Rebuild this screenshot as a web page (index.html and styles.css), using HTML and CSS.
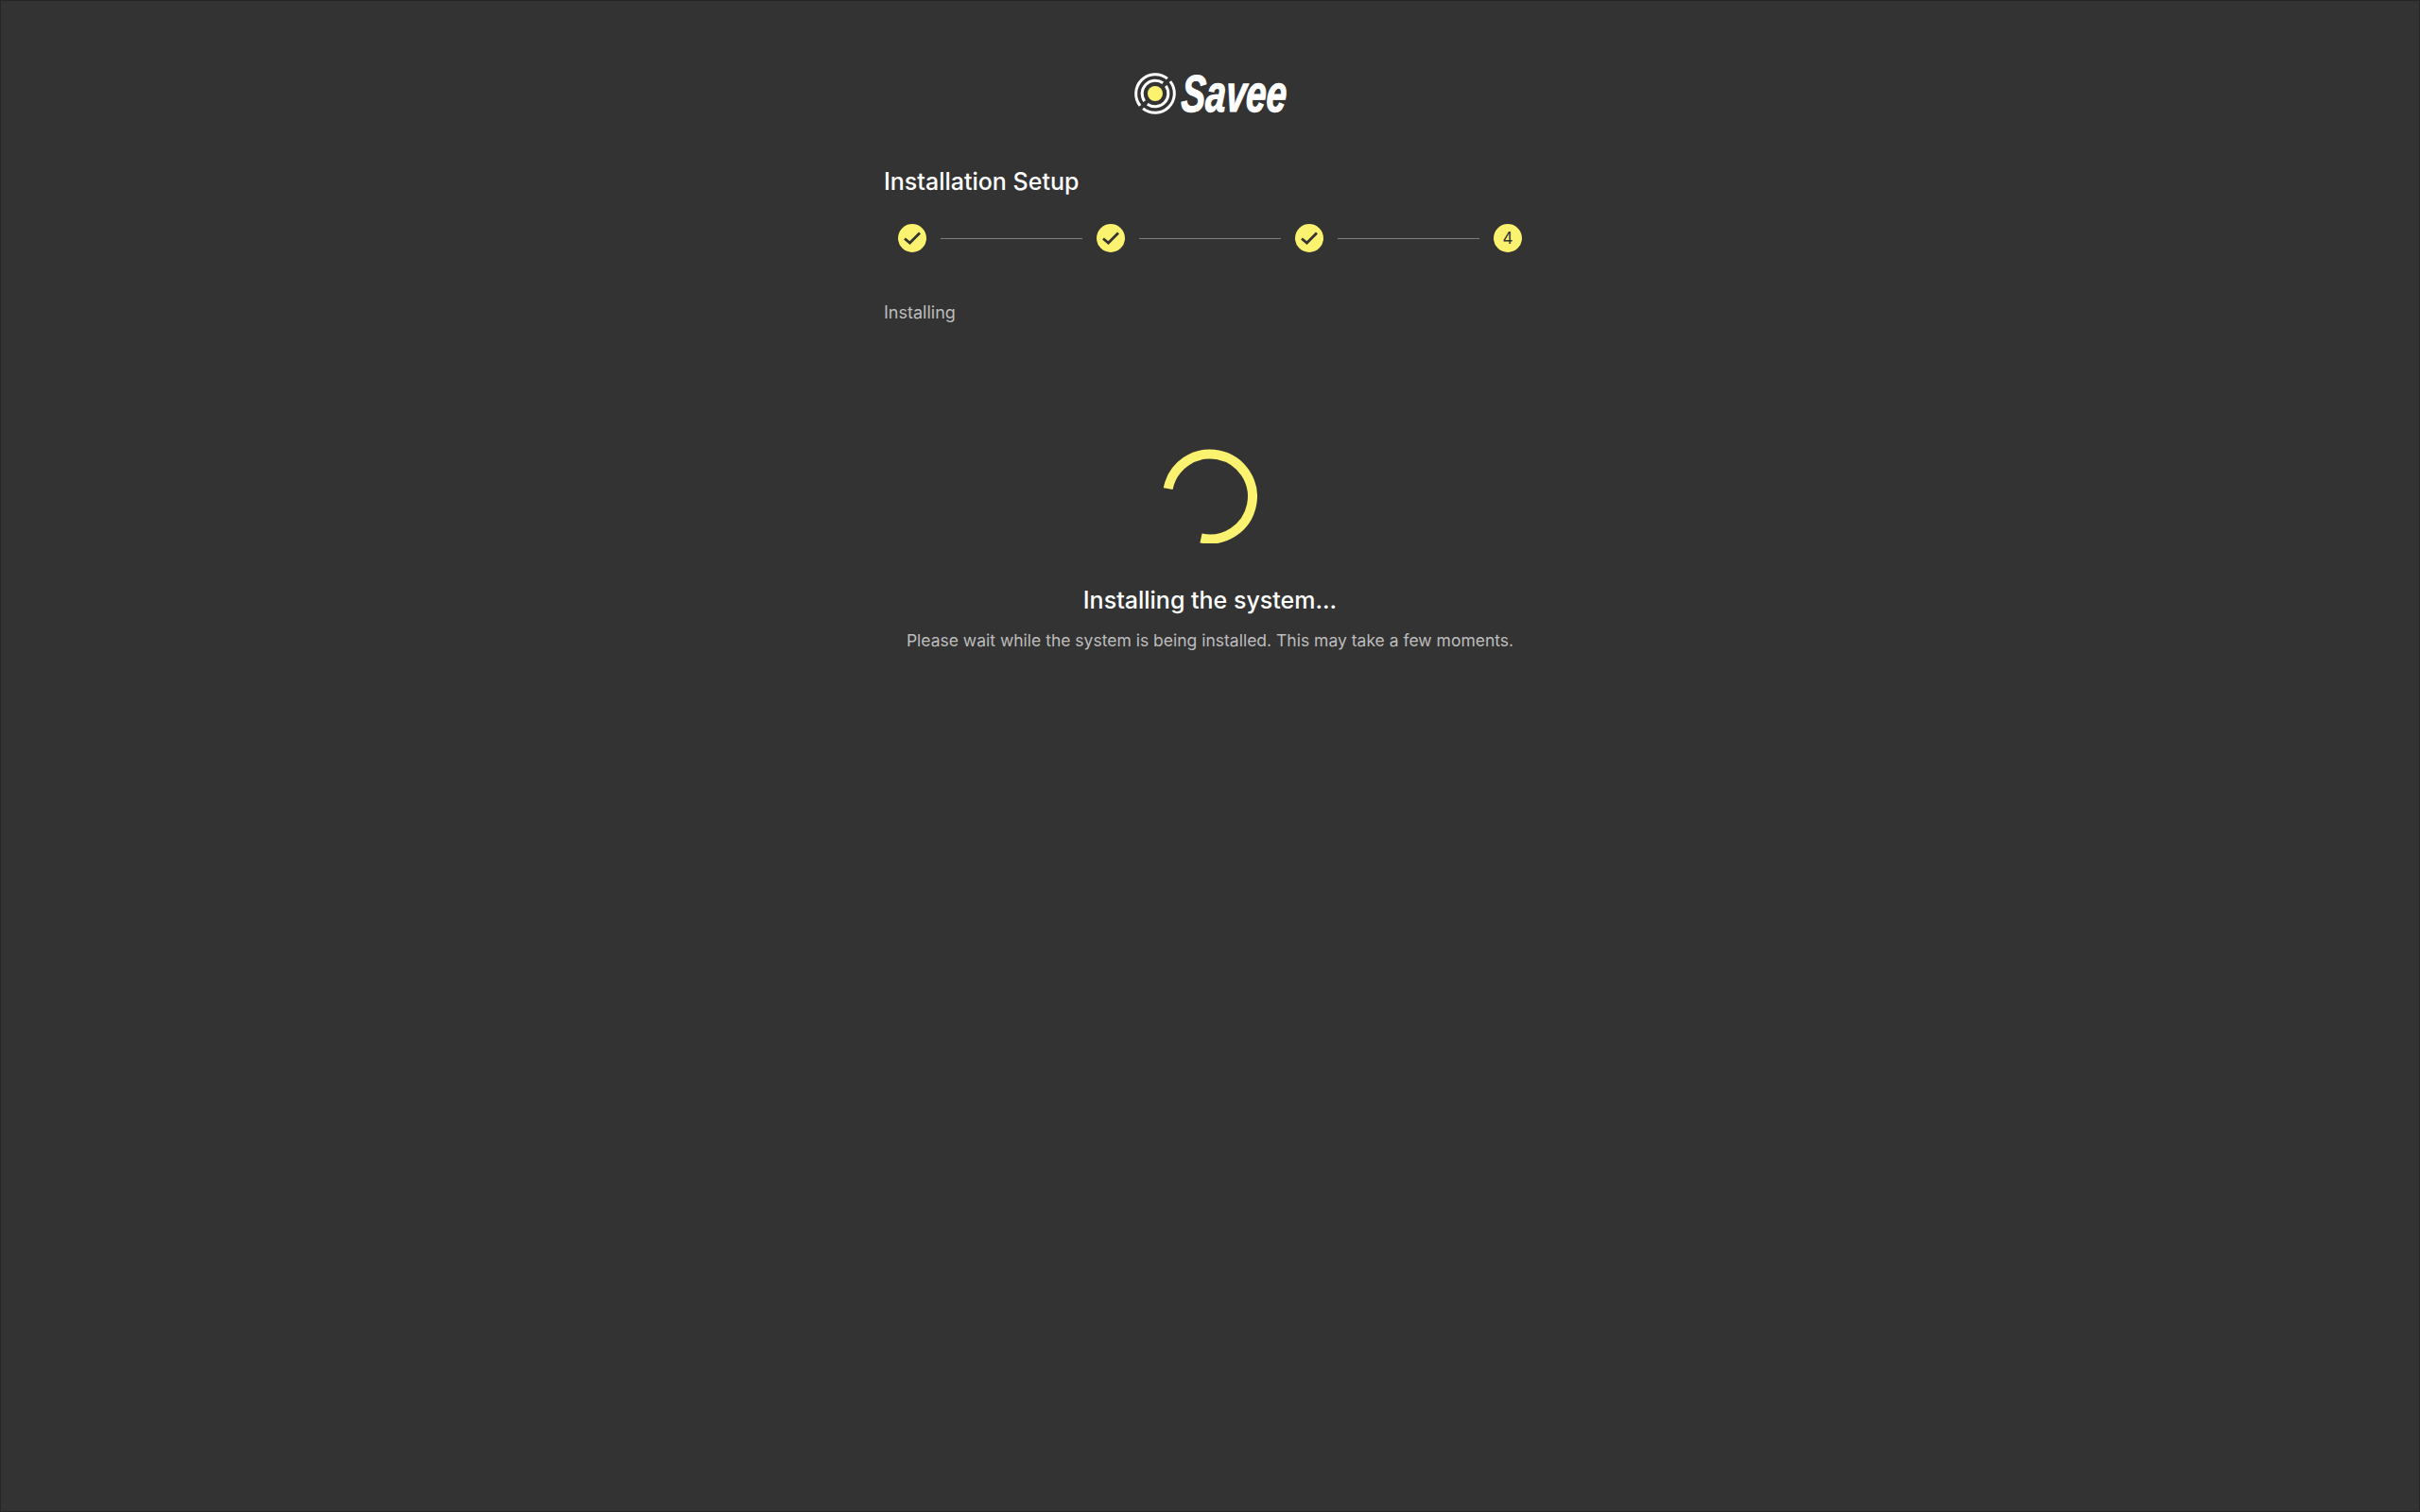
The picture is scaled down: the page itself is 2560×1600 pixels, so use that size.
FILE: index.html
```
<!DOCTYPE html>
<html lang="en">
<head>
<meta charset="utf-8">
<title>Savee Installation Setup</title>
<link rel="stylesheet" href="styles.css">
</head>
<body>
<main class="page">
  <header class="logo">
    <svg class="logo-mark" viewBox="0 0 46 46" width="46" height="46" fill="none">
      <circle cx="23" cy="23" r="8" fill="#fbf26f"/>
      <g stroke="#fff" stroke-width="3">
        <path d="M38.9 10.1A20.5 20.5 0 0 1 10.1 38.9"/>
        <path d="M7.1 35.9A20.5 20.5 0 0 1 35.9 7.1"/>
        <path d="M34.3 14.8A14 14 0 0 1 14.8 34.3"/>
        <path d="M11.7 31.2A14 14 0 0 1 31.2 11.7"/>
      </g>
    </svg>
    <span class="logo-text"><span class="logo-glyphs">Savee</span></span>
  </header>
  <section class="setup">
    <h1 class="title">Installation Setup</h1>
    <ol class="stepper">
      <li class="step"><svg viewBox="0 0 30 30" width="30" height="30" fill="none"><path d="M7 15.5l5.5 4.5 10.5-10.5" class="tick"/></svg></li>
      <li class="line"></li>
      <li class="step"><svg viewBox="0 0 30 30" width="30" height="30" fill="none"><path d="M7 15.5l5.5 4.5 10.5-10.5" class="tick"/></svg></li>
      <li class="line"></li>
      <li class="step"><svg viewBox="0 0 30 30" width="30" height="30" fill="none"><path d="M7 15.5l5.5 4.5 10.5-10.5" class="tick"/></svg></li>
      <li class="line"></li>
      <li class="step">4</li>
    </ol>
    <p class="label">Installing</p>
    <div class="progress">
      <svg class="spinner" viewBox="0 0 100 100" width="100" height="100" fill="none">
        <path d="M40.5 94.5A45 45 0 1 0 5.7 42.2"/>
      </svg>
      <h2 class="heading">Installing the system...</h2>
      <p class="note">Please wait while the system is being installed. This may take a few moments.</p>
    </div>
  </section>
</main>
</body>
</html>
```
FILE: styles.css
```
html, body {
  margin: 0;
  height: 100%;
}
body {
  background: #333333;
  color: #ffffff;
  font-family: Inter, "Liberation Sans", sans-serif;
}
.page {
  box-sizing: border-box;
  height: 1600px;
  border: 1px solid #262626;
  display: flex;
  flex-direction: column;
  align-items: center;
  padding-top: 74px;
}
.logo {
  display: flex;
  align-items: center;
  gap: 5px;
  height: 48px;
}
.logo-mark {
  display: block;
}
.logo-text {
  display: block;
  width: 112px;
  font-family: "Liberation Sans", sans-serif;
  font-weight: 700;
  font-style: italic;
  font-size: 55px;
  line-height: 48px;
  color: #ffffff;
}
.logo-glyphs {
  display: inline-block;
  transform: scaleX(0.7) skewX(-5deg);
  transform-origin: left center;
  -webkit-text-stroke: 1.2px #ffffff;
}
.setup {
  width: 690px;
  margin-top: 51px;
}
.title {
  margin: 0;
  font-size: 25px;
  line-height: 36px;
  font-weight: 500;
}
.stepper {
  list-style: none;
  margin: 27px 0 0;
  padding: 0 15px;
  display: flex;
  align-items: center;
  gap: 15px;
}
.step {
  width: 30px;
  height: 30px;
  flex: none;
  border-radius: 50%;
  background: #fbf26f;
  color: #333333;
  font-size: 17px;
  line-height: 30px;
  text-align: center;
}
.step svg {
  display: block;
}
.tick {
  stroke: #333333;
  stroke-width: 2.8;
}
.line {
  flex: 1;
  height: 1px;
  background: #808080;
}
.label {
  margin: 50px 0 0;
  font-size: 18px;
  line-height: 27px;
  color: #bdbdbd;
}
.progress {
  display: flex;
  flex-direction: column;
  align-items: center;
  margin-top: 131px;
}
.spinner {
  display: block;
}
.spinner path {
  stroke: #fbf26f;
  stroke-width: 10;
}
.heading {
  margin: 41px 0 0;
  font-size: 25px;
  line-height: 39px;
  font-weight: 500;
}
.note {
  margin: 9px 0 0;
  font-size: 17.5px;
  line-height: 27px;
  color: #bdbdbd;
}
```
